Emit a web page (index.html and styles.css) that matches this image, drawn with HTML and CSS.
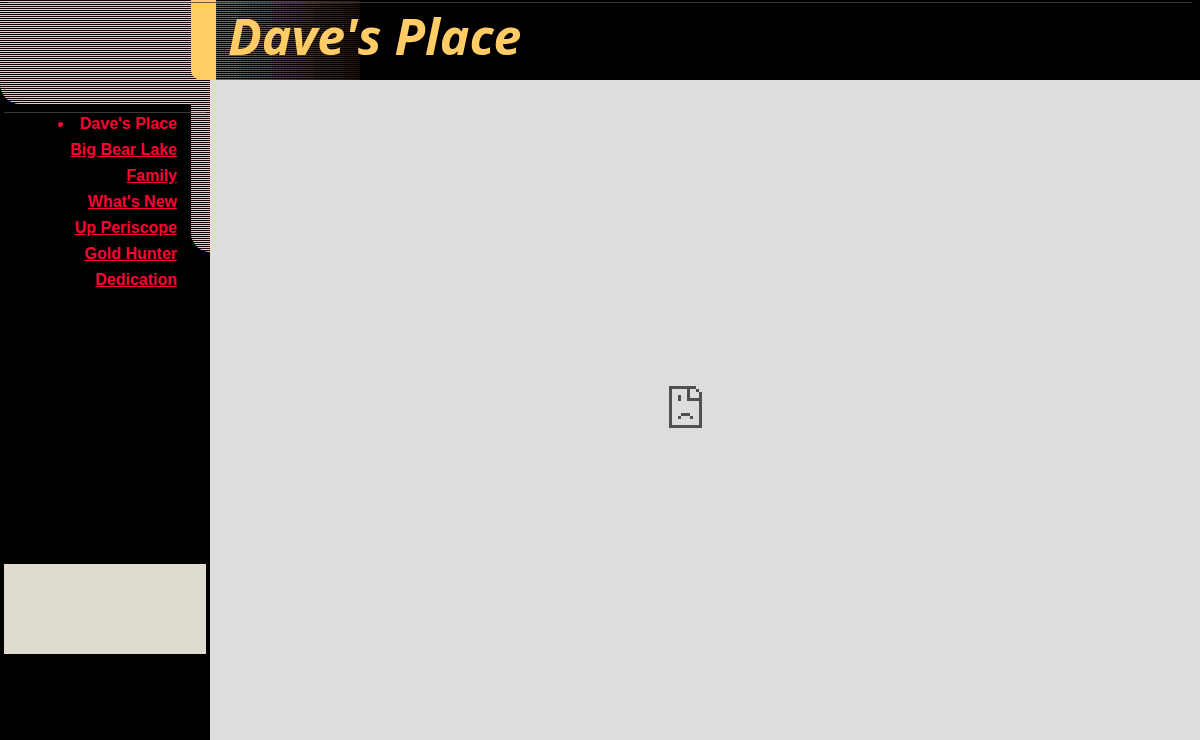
FILE: index.html
```html
<!DOCTYPE html>
<html lang="en">
<head>
    <meta charset="utf-8">
    <title>Dave's Place</title>
    <link rel="stylesheet" href="styles.css">
</head>
<body>
    <header class="banner">
        <hr class="rule rule-top">
        <div class="stripes banner-left"></div>
        <div class="banner-tab"></div>
        <div class="banner-title">
            <h1>Dave's Place</h1>
        </div>
    </header>

    <div class="frames">
        <aside class="sidebar">
            <div class="stripes sidebar-cap"></div>
            <hr class="rule rule-side">
            <div class="sidebar-body">
                <nav>
                    <ul class="menu">
                        <li class="current">Dave's Place</li>
                        <li><a href="#bigbear">Big Bear Lake</a></li>
                        <li><a href="#family">Family</a></li>
                        <li><a href="#new">What's New</a></li>
                        <li><a href="#periscope">Up Periscope</a></li>
                        <li><a href="#gold">Gold Hunter</a></li>
                        <li><a href="#dedication">Dedication</a></li>
                    </ul>
                </nav>
                <div class="stripes sidebar-band"></div>
            </div>
            <div class="ad"></div>
        </aside>

        <main class="content">
            <!-- broken page icon -->
            <svg class="sad-page" width="33" height="42" viewBox="0 0 11 14" shape-rendering="crispEdges" aria-hidden="true">
                <path d="M0 0h9v1h-2v3h3v-2h1v12h-11zM1 1v12h9v-8h-4v-4z" fill-rule="evenodd"/>
                <path d="M9 1h1v1h-1zM3 3h1v2h-1zM4 9h3v1h-3zM3 10h1v1h-1zM7 10h1v1h-1z"/>
            </svg>
        </main>
    </div>
</body>
</html>
```

FILE: styles.css
```css
body {
    margin: 0;
    min-height: 100vh;
    display: flex;
    flex-direction: column;
    background: #000;
    color: #ff0033;
    font-family: "Liberation Sans", Arial, sans-serif;
}
.stripes {
    background: repeating-linear-gradient(#100000 0 1px, #ffcc66 1px 2px);
}
.rule {
    position: absolute;
    height: 1px;
    margin: 0;
    border: none;
    background: rgba(70, 65, 60, 0.8);
}

/* top frame */
.banner {
    position: relative;
    display: flex;
    height: 80px;
}
.rule-top {
    top: 2px;
    left: 8px;
    right: 8px;
}
.banner-left {
    width: 201px;
}
.banner-tab {
    width: 25px;
    margin-left: -10px;
    background: #ffcc66;
    border-radius: 0 0 0 10px;
}
.banner-title {
    flex: 1;
    padding-left: 12px;
    /* striped pattern fading out to black */
    background:
        repeating-linear-gradient(90deg, transparent 0 2px, rgba(0, 0, 0, 0.2) 2px 3px),
        repeating-linear-gradient(#000 0 1px, transparent 1px 2px),
        linear-gradient(90deg, #96703c, #5a4424 50%, #24140c);
    background-size: 144px 100%;
    background-repeat: no-repeat;
}
.banner-title h1 {
    margin: 0;
    color: #ffcc66;
    font: italic bold 50px/72px "Open Sans", sans-serif;
}

/* lower frames */
.frames {
    flex: 1;
    display: flex;
}
.sidebar {
    position: relative;
    width: 210px;
}
.rule-side {
    top: 32px;
    left: 4px;
    right: 4px;
}
.sidebar-cap {
    height: 24px;
    border-radius: 0 0 0 20px;
}
.sidebar-body {
    display: flex;
    justify-content: space-between;
}
.sidebar-band {
    width: 19px;
    height: 148px;
    border-radius: 0 0 0 20px;
}
.menu {
    margin: 0;
    padding: 7px 0 0 70px;
    width: 107px;
    font-size: 16px;
    font-weight: bold;
    line-height: 26px;
    text-align: right;
    white-space: nowrap;
    list-style: none;
}
.menu .current {
    list-style: disc inside;
    margin-left: -20px;
}
.menu a {
    color: #ff0033;
}
.ad {
    height: 90px;
    margin: 271px 4px 0;
    background: #dfdbcf;
}
.content {
    flex: 1;
    display: flex;
    align-items: center;
    justify-content: center;
    padding: 0 40px 6px 0;
    background: #ddd;
}
.sad-page {
    fill: #505050;
}
```
